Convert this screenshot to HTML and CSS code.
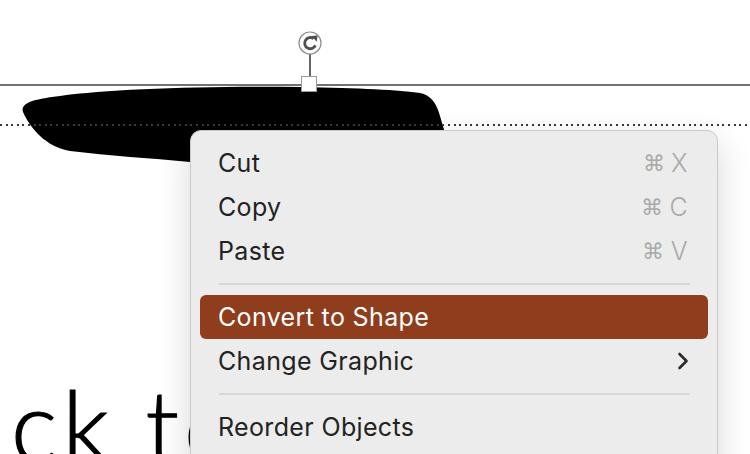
FILE: index.html
```html
<!DOCTYPE html>
<html lang="en">
<head>
<meta charset="utf-8">
<title>Context menu</title>
<link rel="stylesheet" href="styles.css">
</head>
<body>
<div class="stage">
  <svg class="art" width="750" height="454" viewBox="0 0 750 454" xmlns="http://www.w3.org/2000/svg">
    <path class="blob" d="M23 112 C20 102 36 99 60 96 C110 89 200 86 300 87 C360 88 400 90 420 93 C431 95 437 104 440 116 L447 140 L447 162 L190 162 C150 158 110 156 70 151 C46 147 30 128 23 112 Z"/>
    <rect class="guide" x="0" y="84" width="750" height="2"/>
    <rect class="stem" x="309" y="54" width="2" height="23"/>
    <rect class="handle" x="301.5" y="76.5" width="15" height="15"/>
    <circle class="rot-ring" cx="310" cy="43" r="11"/>
    <path class="rot-arrow" d="M313.6 38.6 A5.6 5.6 0 1 0 315.4 45.4"/>
    <path class="rot-head" d="M311.4 36.0 L317.6 35.4 L316.8 41.8 Z"/>
  </svg>
  <div class="dots"></div>
  <div class="slide-text">ck to</div>

  <div class="menu">
    <div class="item"><span class="label">Cut</span><span class="key"><span class="cmd">⌘</span>X</span></div>
    <div class="item"><span class="label">Copy</span><span class="key"><span class="cmd">⌘</span>C</span></div>
    <div class="item"><span class="label">Paste</span><span class="key"><span class="cmd">⌘</span>V</span></div>
    <div class="sep"></div>
    <div class="item active"><span class="label">Convert to Shape</span></div>
    <div class="item"><span class="label">Change Graphic</span>
      <svg class="chev" width="12" height="18" viewBox="0 0 12 18"><path d="M2.5 2 L9.5 9 L2.5 16"/></svg>
    </div>
    <div class="sep"></div>
    <div class="item"><span class="label">Reorder Objects</span></div>
  </div>
</div>
</body>
</html>
```

FILE: styles.css
```css
html, body {
  margin: 0;
  padding: 0;
  background: #ffffff;
}

.stage {
  position: relative;
  width: 750px;
  height: 454px;
  overflow: hidden;
  background: #ffffff;
}

.art {
  position: absolute;
  left: 0;
  top: 0;
}

.blob { fill: #000000; }
.guide { fill: #717171; }
.stem { fill: #666666; }
.handle { fill: #ffffff; stroke: #9a9a9a; stroke-width: 1; }
.rot-ring { fill: #ffffff; stroke: #8c8c8c; stroke-width: 1.2; }
.rot-arrow { fill: none; stroke: #4f4f4f; stroke-width: 2.8; }
.rot-head { fill: #4f4f4f; }

.dots {
  position: absolute;
  left: 0;
  top: 124px;
  width: 750px;
  height: 2px;
  background-image: repeating-linear-gradient(to right, #3a3a3a 0 2px, transparent 2px 5.6px);
}

.slide-text {
  position: absolute;
  left: 11px;
  top: 364px;
  font-family: Lato, "Liberation Sans", sans-serif;
  font-weight: 300;
  font-size: 98px;
  line-height: 120px;
  letter-spacing: 5px;
  -webkit-text-stroke: 1.2px #000;
  color: #000000;
  white-space: nowrap;
}

.menu {
  position: absolute;
  left: 190px;
  top: 130px;
  width: 528px;
  height: 360px;
  padding: 10px 9px;
  box-sizing: border-box;
  background: #ececec;
  border: 1px solid #c9c9c9;
  border-radius: 11px;
  box-shadow: 0 12px 34px rgba(0, 0, 0, 0.16);
  font-family: Inter, "Noto Sans", sans-serif;
  font-size: 25px;
  color: #222222;
  display: flex;
  flex-direction: column;
}

.item {
  height: 44px;
  flex: none;
  display: flex;
  align-items: center;
  justify-content: space-between;
  padding: 0 20px 0 18px;
  border-radius: 6px;
  letter-spacing: 0.35px;
}

.item.active {
  background: #8f3d1d;
  color: #ffffff;
}

.key {
  color: #a9a9a9;
  font-weight: 300;
  display: flex;
  align-items: center;
  gap: 6px;
}

.cmd {
  font-family: "DejaVu Sans", sans-serif;
  font-size: 22px;
}

.chev {
  display: block;
  margin-right: -1px;
}
.chev path {
  fill: none;
  stroke: #2a2a2a;
  stroke-width: 2.6;
  stroke-linecap: round;
  stroke-linejoin: round;
}

.sep {
  height: 2px;
  flex: none;
  background: #d6d6d6;
  margin: 10px 18px 10px 19px;
}
```
